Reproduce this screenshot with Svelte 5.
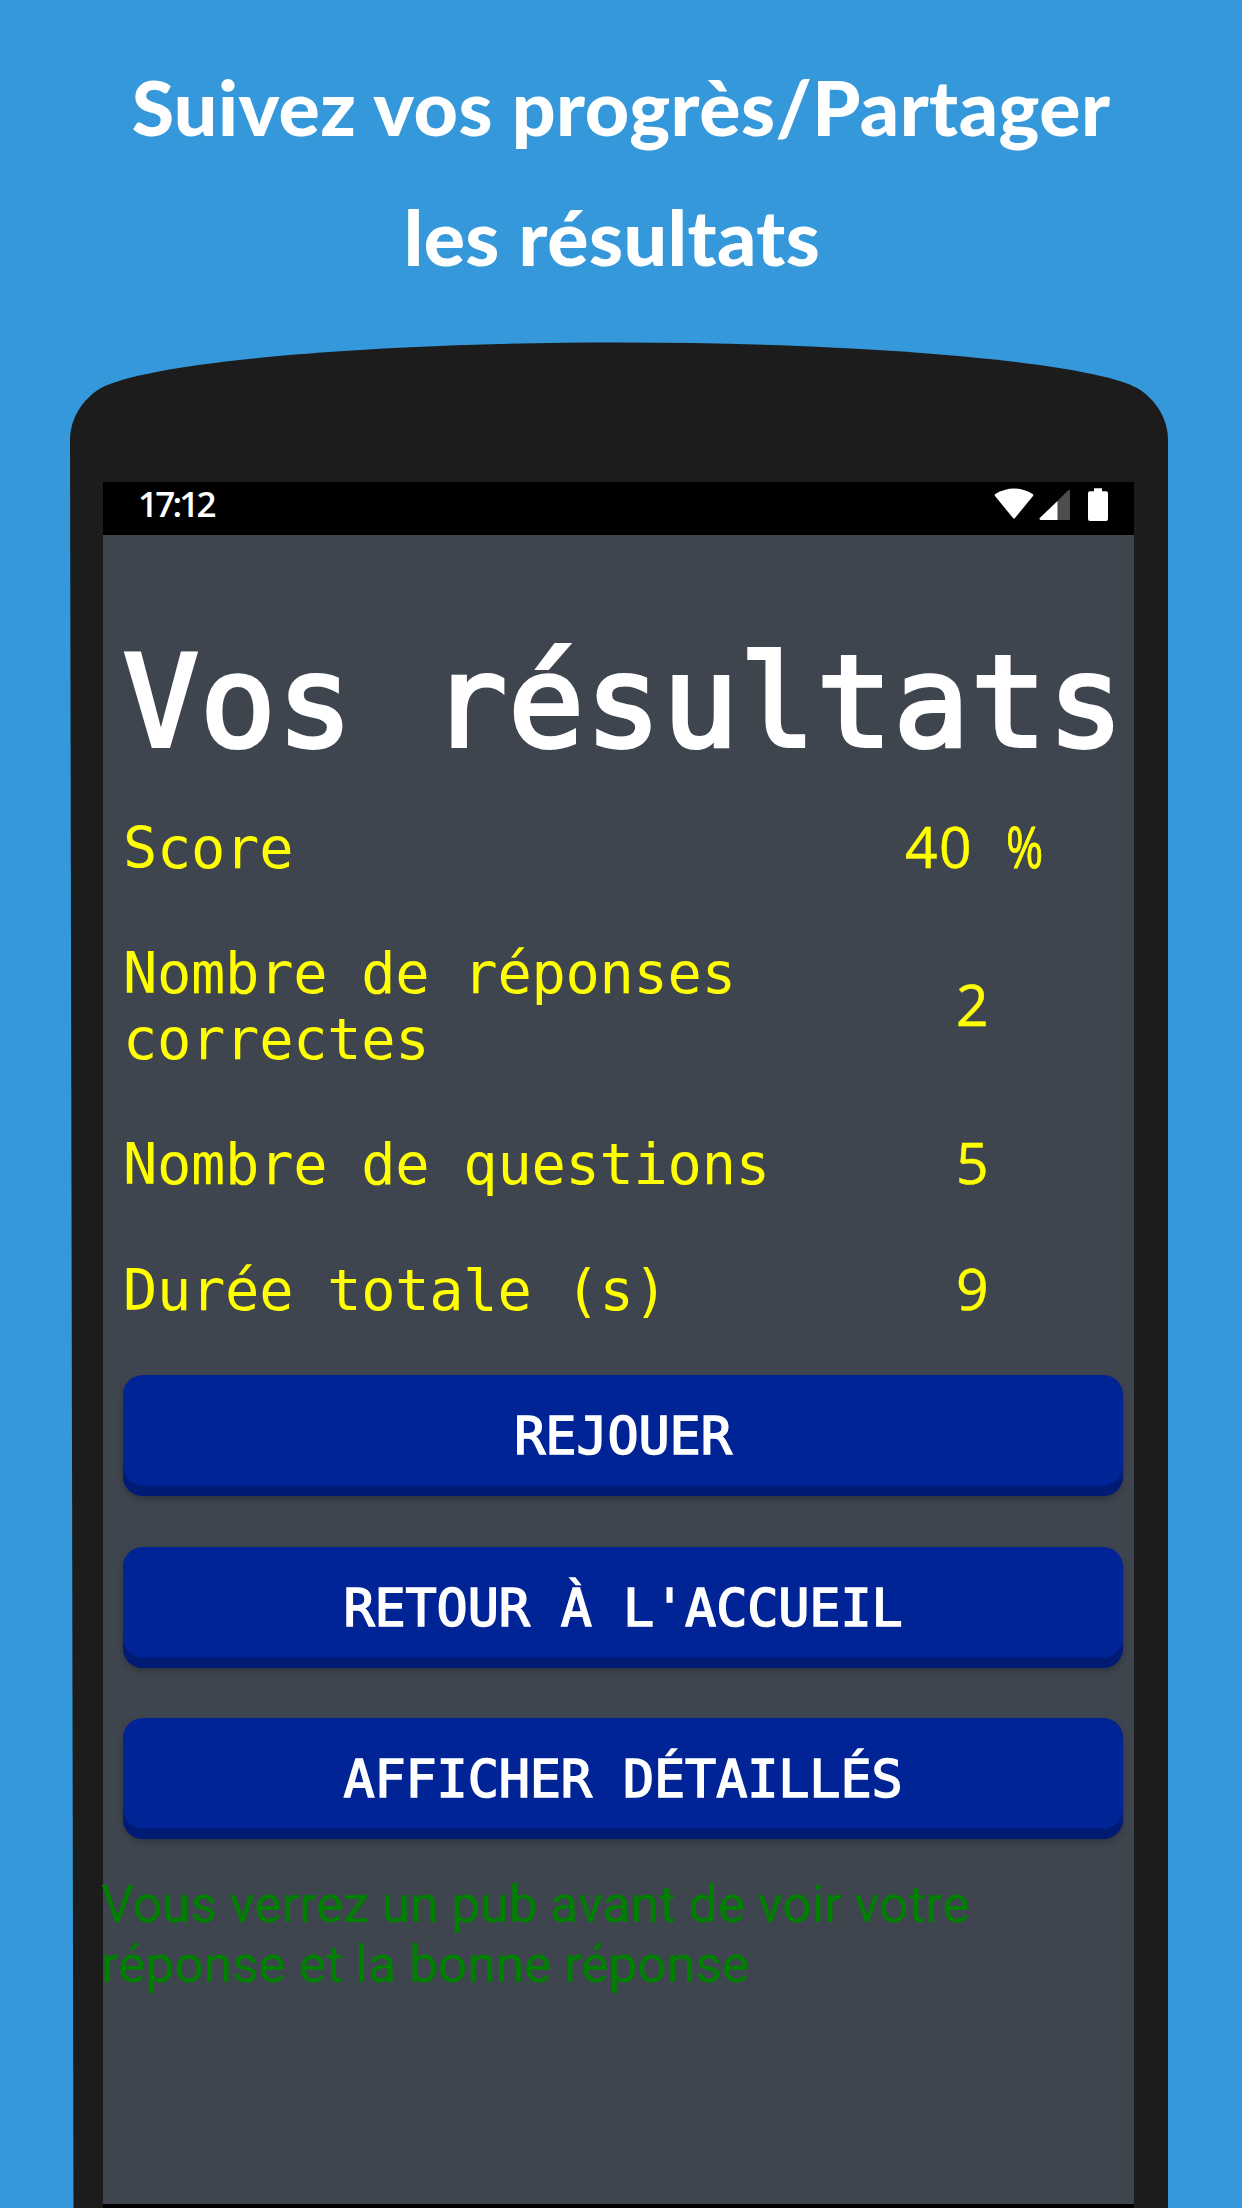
<script>
  const results = [
    { label: 'Score', value: '40', unit: '%' },
    { label: 'Nombre de réponses correctes', value: '2' },
    { label: 'Nombre de questions', value: '5' },
    { label: 'Durée totale (s)', value: '9' }
  ];
  const actions = ['Rejouer', "Retour à l'accueil", 'Afficher détaillés'];
</script>

<main class="page">
  <h1 class="promo">
    <span class="first">Suivez vos progrès/Partager</span>
    <span class="second">les résultats</span>
  </h1>

  <div class="phone">
    <svg class="frame" viewBox="0 0 1242 1868" aria-hidden="true">
      <path
        d="M73.5 1868 L70 98 C70 78 81 58 101 46 C150 20 370 0.5 619 0.5 C868 0.5 1088 20 1137 46 C1157 58 1168 78 1168 98 L1168 1868 Z"
      />
    </svg>

    <div class="screen">
      <header class="status">
        <span class="time">17:12</span>
        <svg class="icons" viewBox="0 0 116 34" aria-hidden="true">
          <path class="on" d="M1 8 Q0.2 6.8 1.3 6 Q19.8 -5 38.7 6 Q39.8 6.8 39 8 L21 30 Q20 31 19 30 Z" />
          <path class="off" d="M63 13.5 L73.5 3 Q76 1 76 3.5 V31 Q76 32 75 32 H63 Z" />
          <path class="on" d="M63.5 13 V32 H46.5 Q45 31.5 45.7 30 Z" />
          <path class="on" d="M100 0.3 H108 V3.3 H112 Q114 3.3 114 5.3 V31 Q114 33 112 33 H96 Q94 33 94 31 V5.3 Q94 3.3 96 3.3 H100 Z" />
        </svg>
      </header>

      <section class="content">
        <h2>Vos résultats</h2>

        <dl class="results">
          {#each results as row}
            <div class="row">
              <dt>{row.label}</dt>
              <dd>
                <span class="digits">{row.value}</span>{#if row.unit}&nbsp;<span class="unit">{row.unit}</span>{/if}
              </dd>
            </div>
          {/each}
        </dl>

        <div class="actions">
          {#each actions as action}
            <button type="button">{action}</button>
          {/each}
        </div>
      </section>

      <p class="notice">Vous verrez un pub avant de voir votre réponse et la bonne réponse</p>
    </div>
  </div>
</main>

<style>
  :global(body) {
    background: #3498db;
  }

  .page {
    width: 1242px;
    height: 2208px;
    overflow: hidden;
    display: flex;
    flex-direction: column;
    background: #3498db;
  }

  .promo {
    box-sizing: border-box;
    flex: none;
    height: 342px;
    margin: 0;
    padding-top: 41px;
    display: flex;
    flex-direction: column;
    align-items: center;
    color: #fff;
    font: 900 77px/130px Lato, sans-serif;
    letter-spacing: 0.45px;
    white-space: nowrap;
  }

  .second {
    padding-right: 18px;
  }

  .phone {
    position: relative;
    flex: none;
    height: 1866px;
    box-sizing: border-box;
    padding: 140px 108px 0 103px;
  }

  .frame {
    position: absolute;
    inset: 0;
    width: 1242px;
    height: 1868px;
    fill: #1c1c1c;
  }

  .screen {
    position: relative;
    box-sizing: border-box;
    height: 1726px;
    background: #3f454f;
    border-bottom: 4px solid #000;
  }

  .status {
    display: flex;
    justify-content: space-between;
    height: 53px;
    box-sizing: border-box;
    padding: 5px 24px 0 35px;
    background: #000;
  }

  .time {
    color: #fff;
    font: 600 35px/34px 'Open Sans', sans-serif;
    letter-spacing: -2.8px;
  }

  .icons {
    width: 116px;
    height: 34px;
    margin-top: 1px;
  }

  .on {
    fill: #fff;
  }

  .off {
    fill: #4d4d4d;
  }

  .content {
    padding: 94px 11px 0 20px;
  }

  h2 {
    margin: 0;
    color: #fff;
    font: 400 126px/148px 'DejaVu Sans Mono', monospace;
    letter-spacing: 1.2px;
    -webkit-text-stroke: 4px #fff;
    white-space: nowrap;
  }

  .results {
    margin: 9px 0 22px;
    color: #ff0;
    font: 57px/65.6px 'DejaVu Sans Mono', monospace;
    letter-spacing: -0.28px;
  }

  .row {
    display: grid;
    grid-template-columns: 7fr 3fr;
    align-items: center;
    height: 65.6px;
    padding: 29.9px 0;
  }

  .row:nth-child(2) {
    height: 131.2px;
  }

  dt,
  dd {
    margin: 0;
  }

  dd {
    text-align: center;
  }

  .digits {
    font-family: 'Open Sans', sans-serif;
    line-height: 1;
    letter-spacing: 1.5px;
    -webkit-text-stroke: 0.5px #ff0;
  }

  /* narrowed to one character cell */
  .unit {
    display: inline-block;
    width: 34px;
    font-family: 'Open Sans', sans-serif;
    line-height: 1;
    transform: translateX(-1px) scaleX(0.79);
    transform-origin: left;
    -webkit-text-stroke: 0.8px #ff0;
  }

  .actions {
    display: grid;
    gap: 50.7px;
  }

  button {
    height: 121px;
    border: 0;
    border-radius: 20px;
    padding: 2px 0 0;
    background: #002395;
    box-shadow: inset 0 -10.5px #001b73, 0 3px 6px rgba(0, 0, 0, 0.25);
    color: #fff;
    font: 51.8px/119px 'DejaVu Sans Mono', monospace;
    letter-spacing: -0.12px;
    -webkit-text-stroke: 1.6px #fff;
    text-transform: uppercase;
  }

  .notice {
    width: 960px;
    margin: 36px 0 0 -2px;
    color: #008000;
    font: 51.5px/60px Roboto, sans-serif;
  }
</style>
